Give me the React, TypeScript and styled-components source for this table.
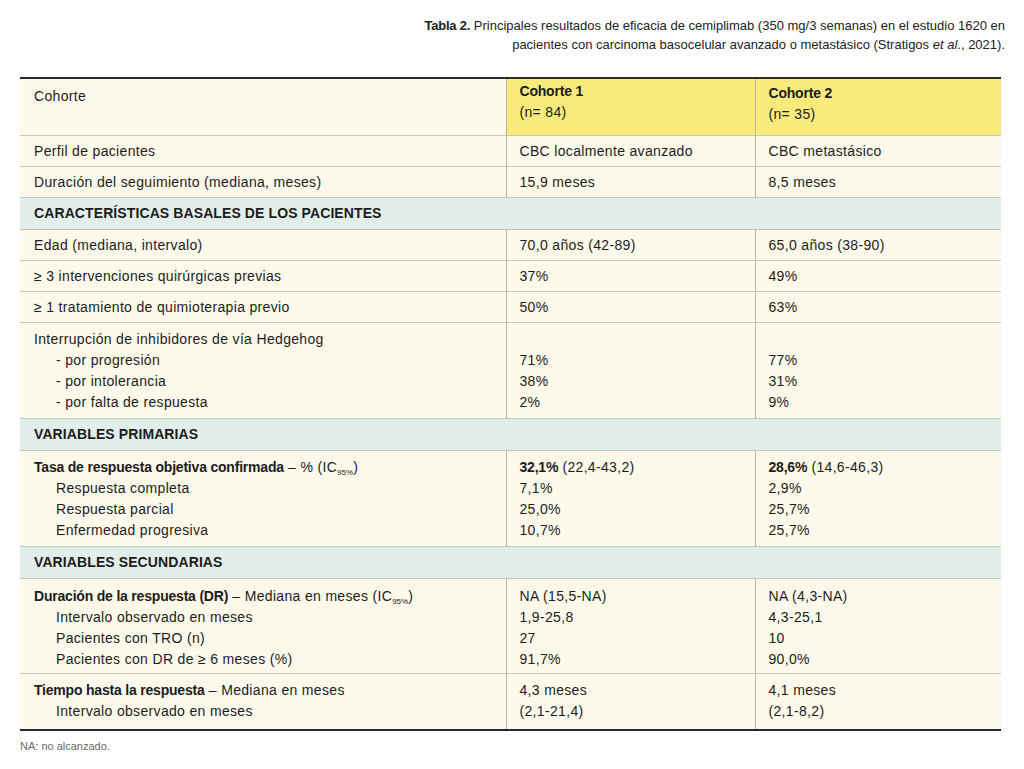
import React from "react";
import styled, { createGlobalStyle } from "styled-components";

const Global = createGlobalStyle`
  html, body { margin: 0; padding: 0; background: #ffffff; }
  body { font-family: "Liberation Sans", Arial, sans-serif; color: #1c1c1c; }
`;

const Page = styled.div`
  width: 1024px;
  height: 769px;
  box-sizing: border-box;
  padding: 16px 21px 0 20px;
  display: flex;
  flex-direction: column;
`;

const Caption = styled.p`
  margin: 0 -2px 23px 0;
  align-self: flex-end;
  text-align: right;
  font-size: 13px;
  line-height: 19px;
  color: #222;
  b { font-weight: 700; letter-spacing: -0.2px; }
  i { font-style: italic; }
`;

const Table = styled.table`
  width: 981px;
  border-collapse: collapse;
  table-layout: fixed;
  border-top: 2px solid #2b2b2b;
  border-bottom: 2px solid #2b2b2b;
  font-size: 14px;
  line-height: 21px;
  letter-spacing: 0.33px;
`;

const Cell = styled.td<{ $head?: boolean; $pad: string }>`
  background: ${(p) => (p.$head ? "#f9ea7c" : "#fdfaec")};
  border-top: 1px solid #c9c4b4;
  border-left: 1px solid #b9b4a4;
  padding: ${(p) => p.$pad};
  vertical-align: top;
  &:first-child { border-left: none; padding-left: 14px; }
`;

const HeadRow = styled.tr`
  height: 57px;
  td { border-top: none; }
`;

const SectionCell = styled.td`
  background: #e2eeea;
  border-top: 1px solid #c3cbc6;
  height: 32px;
  box-sizing: border-box;
  padding: 1px 14px 0;
  font-weight: 700;
  vertical-align: middle;
  letter-spacing: 0.1px;
`;

const Line = styled.div<{ $indent?: boolean }>`
  padding-left: ${(p) => (p.$indent ? "22px" : "0")};
  white-space: nowrap;
`;

const Strong = styled.b`
  font-weight: 700;
  letter-spacing: -0.2px;
`;

const Sub = styled.sub`
  font-size: 8px;
  line-height: 0;
  vertical-align: -3px;
  letter-spacing: 0;
`;

const Footnote = styled.div`
  margin-top: 9px;
  font-size: 11px;
  color: #6a6a6a;
`;

type Row =
  | { kind: "section"; title: string }
  | { kind: "data"; c1: React.ReactNode[]; c2: React.ReactNode[]; c3: React.ReactNode[]; indentFrom?: number; pad?: string };

const IC = (
  <>
    (IC<Sub>95%</Sub>)
  </>
);

const rows: Row[] = [
  { kind: "data", c1: ["Perfil de pacientes"], c2: ["CBC localmente avanzado"], c3: ["CBC metastásico"] },
  { kind: "data", c1: ["Duración del seguimiento (mediana, meses)"], c2: ["15,9 meses"], c3: ["8,5 meses"] },
  { kind: "section", title: "CARACTERÍSTICAS BASALES DE LOS PACIENTES" },
  { kind: "data", c1: ["Edad (mediana, intervalo)"], c2: ["70,0 años (42-89)"], c3: ["65,0 años (38-90)"] },
  { kind: "data", c1: ["≥ 3 intervenciones quirúrgicas previas"], c2: ["37%"], c3: ["49%"] },
  { kind: "data", c1: ["≥ 1 tratamiento de quimioterapia previo"], c2: ["50%"], c3: ["63%"] },
  {
    kind: "data",
    c1: ["Interrupción de inhibidores de vía Hedgehog", "- por progresión", "- por intolerancia", "- por falta de respuesta"],
    c2: ["\u00a0", "71%", "38%", "2%"],
    c3: ["\u00a0", "77%", "31%", "9%"],
    indentFrom: 1,
    pad: "6px 13px 5px",
  },
  { kind: "section", title: "VARIABLES PRIMARIAS" },
  {
    kind: "data",
    c1: [
      <>
        <Strong>Tasa de respuesta objetiva confirmada</Strong> – % {IC}
      </>,
      "Respuesta completa",
      "Respuesta parcial",
      "Enfermedad progresiva",
    ],
    c2: [
      <>
        <Strong>32,1%</Strong> (22,4-43,2)
      </>,
      "7,1%",
      "25,0%",
      "10,7%",
    ],
    c3: [
      <>
        <Strong>28,6%</Strong> (14,6-46,3)
      </>,
      "2,9%",
      "25,7%",
      "25,7%",
    ],
    indentFrom: 1,
    pad: "6px 13px 5px",
  },
  { kind: "section", title: "VARIABLES SECUNDARIAS" },
  {
    kind: "data",
    c1: [
      <>
        <Strong>Duración de la respuesta (DR)</Strong> – Mediana en meses {IC}
      </>,
      "Intervalo observado en meses",
      "Pacientes con TRO (n)",
      "Pacientes con DR de ≥ 6 meses (%)",
    ],
    c2: ["NA (15,5-NA)", "1,9-25,8", "27", "91,7%"],
    c3: ["NA (4,3-NA)", "4,3-25,1", "10", "90,0%"],
    indentFrom: 1,
    pad: "7px 13px 3px",
  },
  {
    kind: "data",
    c1: [
      <>
        <Strong>Tiempo hasta la respuesta</Strong> – Mediana en meses
      </>,
      "Intervalo observado en meses",
    ],
    c2: ["4,3 meses", "(2,1-21,4)"],
    c3: ["4,1 meses", "(2,1-8,2)"],
    indentFrom: 1,
    pad: "6px 13px 7px",
  },
];

const Lines = ({ items, indentFrom }: { items: React.ReactNode[]; indentFrom?: number }) => (
  <>
    {items.map((t, i) => (
      <Line key={i} $indent={indentFrom !== undefined && i >= indentFrom}>
        {t}
      </Line>
    ))}
  </>
);

export default function App() {
  return (
    <>
      <Global />
      <Page>
        <Caption>
          <b>Tabla 2.</b> Principales resultados de eficacia de cemiplimab (350 mg/3 semanas) en el estudio 1620 en
          <br />
          pacientes con carcinoma basocelular avanzado o metastásico (Stratigos <i>et al</i>., 2021).
        </Caption>
        <Table>
          <colgroup>
            <col style={{ width: 486 }} />
            <col style={{ width: 249 }} />
            <col style={{ width: 246 }} />
          </colgroup>
          <tbody>
            <HeadRow>
              <Cell $pad="7px 13px 0">Cohorte</Cell>
              <Cell $head $pad="2px 13px 0">
                <Line>
                  <Strong>Cohorte 1</Strong>
                </Line>
                <Line>(n= 84)</Line>
              </Cell>
              <Cell $head $pad="4px 13px 0">
                <Line>
                  <Strong>Cohorte 2</Strong>
                </Line>
                <Line>(n= 35)</Line>
              </Cell>
            </HeadRow>
            {rows.map((r, i) => {
              if (r.kind === "section") {
                return (
                  <tr key={i}>
                    <SectionCell colSpan={3}>{r.title}</SectionCell>
                  </tr>
                );
              }
              const pad = r.pad ?? "5px 13px 4px";
              return (
                <tr key={i}>
                  <Cell $pad={pad}>
                    <Lines items={r.c1} indentFrom={r.indentFrom} />
                  </Cell>
                  <Cell $pad={pad}>
                    <Lines items={r.c2} />
                  </Cell>
                  <Cell $pad={pad}>
                    <Lines items={r.c3} />
                  </Cell>
                </tr>
              );
            })}
          </tbody>
        </Table>
        <Footnote>NA: no alcanzado.</Footnote>
      </Page>
    </>
  );
}
